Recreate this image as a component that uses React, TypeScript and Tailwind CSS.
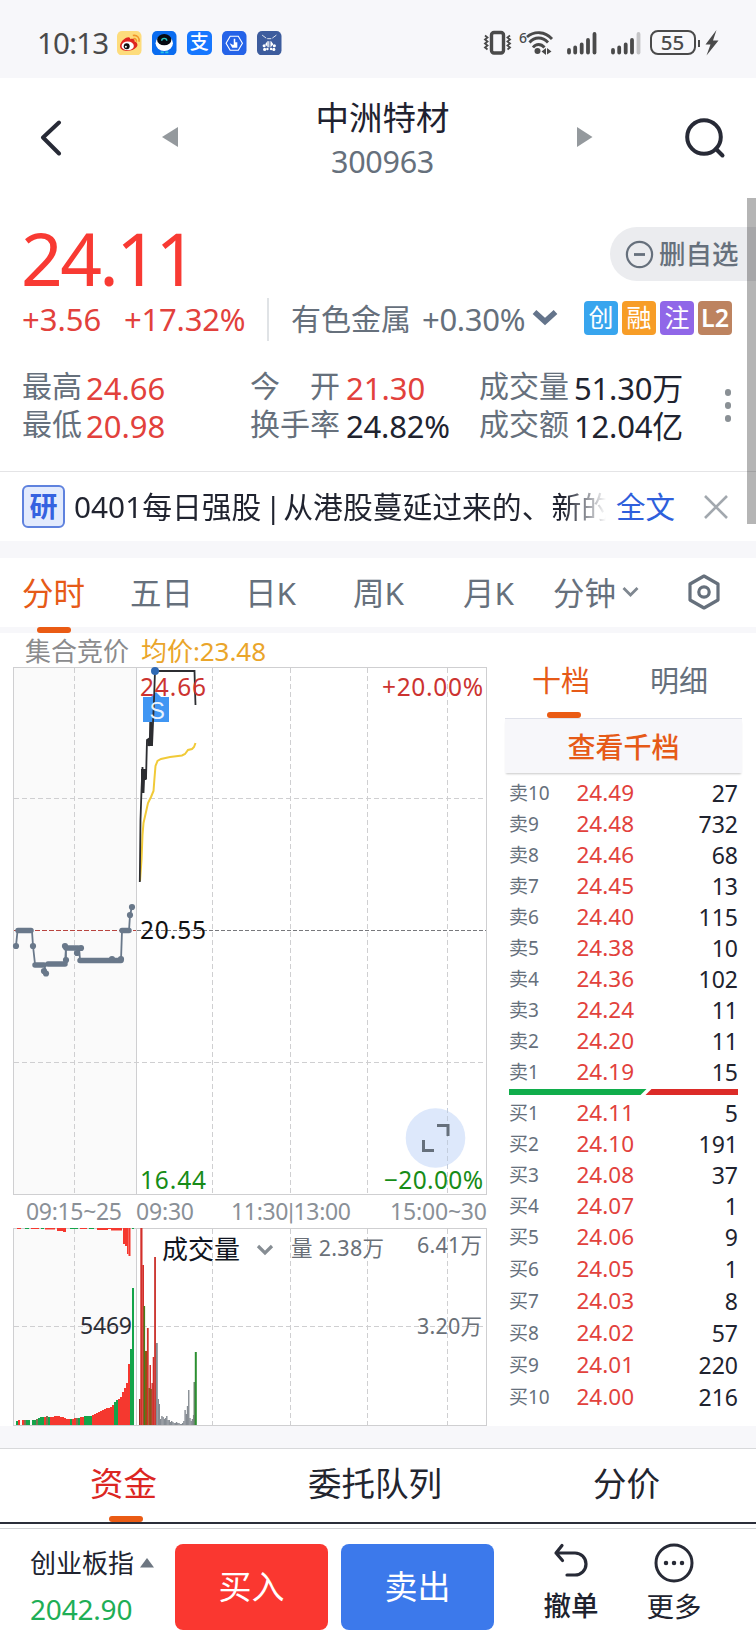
import { useState } from "react";
import clsx from "clsx";

const FONT = "font-['Noto_Sans','Noto_Sans_CJK_SC',sans-serif]";

const sells = [
  ["卖10", "24.49", "27"],
  ["卖9", "24.48", "732"],
  ["卖8", "24.46", "68"],
  ["卖7", "24.45", "13"],
  ["卖6", "24.40", "115"],
  ["卖5", "24.38", "10"],
  ["卖4", "24.36", "102"],
  ["卖3", "24.24", "11"],
  ["卖2", "24.20", "11"],
  ["卖1", "24.19", "15"],
];

const buys = [
  ["买1", "24.11", "5"],
  ["买2", "24.10", "191"],
  ["买3", "24.08", "37"],
  ["买4", "24.07", "1"],
  ["买5", "24.06", "9"],
  ["买6", "24.05", "1"],
  ["买7", "24.03", "8"],
  ["买8", "24.02", "57"],
  ["买9", "24.01", "220"],
  ["买10", "24.00", "216"],
];

const RED = "#f5382f";
const GREEN = "#14a44a";
const GREY = "#868c93";

// call auction volume, one bar per tick
const auctionHeights = [
  4, 5, 5, 5, 5, 5, 5, 5, 5, 5, 6, 7, 8, 8, 8, 9, 8, 8, 8, 9, 9, 9, 8, 8, 7, 6,
  6, 6, 6, 7, 7, 7, 8, 8, 9, 9, 9, 9, 10, 11, 12, 13, 14, 15, 16, 17, 17, 18,
  20, 23, 25, 26, 28, 33, 37, 42, 61, 76, 137,
];
const auctionColors =
  "gr.rngg.ggngggrngrrrrrrrrrrgrrngrrggggrrrrrrrrrrrggrrrrrrgg";

// unmatched volume hanging from the top: [x, width, depth, color]
const unmatched: [number, number, number, string][] = [
  [17, 4, 1, RED],
  [25, 4, 1, GREEN],
  [31, 8, 1, RED],
  [41, 3, 1, GREEN],
  [45, 10, 1.5, RED],
  [57, 6, 3, RED],
  [63, 3, 4, RED],
  [70, 8, 1, GREEN],
  [80, 7, 1, RED],
  [89, 5, 1, GREEN],
  [97, 11, 2, RED],
  [108, 3, 1, RED],
  [111, 11, 2.5, RED],
  [123, 2, 16, RED],
  [125, 2, 18, RED],
  [127, 1.5, 26, RED],
  [128.5, 2, 28, RED],
  [132, 2, 1, GREEN],
];

const sessionBars: [number, number, number, string][] = [
  [139, 1.6, 26, "#9d2a25"],
  [140.3, 2.2, 197, "#d3302b"],
  [142.3, 1.7, 160, "#d3302b"],
  [143.6, 1.5, 119, "#43801c"],
  [145, 2.5, 74, "#8f5514"],
  [146.9, 1.8, 97, "#d3302b"],
  [148.5, 1.6, 37, "#6f6410"],
  [149.5, 1.5, 60, "#d3302b"],
  [150.3, 1.6, 36, "#6f6410"],
  [151.5, 1.4, 42, "#c8302b"],
  [152.7, 1.6, 68, "#d3302b"],
  [154.1, 1.9, 168, "#cc3a35"],
  [156, 1.8, 82, GREY],
  [157.8, 1.2, 26, GREY],
  [159, 1, 21, GREY],
];
const quiet = [
  6, 9, 8, 6, 7, 9, 5, 5, 3, 4, 3, 2, 2, 3, 2, 2, 1, 1, 2, 4, 15, 11, 19, 35, 7,
  4, 6, 10,
];

function BarsIcon({ last }: { last: string }) {
  return (
    <svg width="32" height="26" viewBox="0 0 32 26" strokeLinecap="round" strokeWidth="3.8" stroke="#4a4a4a">
      <path d="M3 20v2.500M9.200 17.500v5M15.700 14.500v8M22 10v12.500" />
      <path d="M28.500 4v18.500" stroke={last} />
    </svg>
  );
}

function StatusBar() {
  return (
    <div className="flex h-[78px] items-center bg-[#f7f7fa] pt-[8px] pl-[37px] text-[#4a4a4a]">
      <span className="w-[80px] text-[29.500px] tracking-[-0.800px]">10:13</span>
      <div className="flex gap-[10.500px]">
        <svg width="24.500" height="24.500" viewBox="0 0 24 24">
          <rect width="24" height="24" rx="5" fill="#fddc7c" />
          <path d="M3 14c1-5 6-8 8-8s2 1 2 2c3-1 5 0 4 2 3 1 4 4 2 6-4 5-17 5-16-2z" fill="#df251f" />
          <ellipse cx="10.500" cy="14.600" rx="6" ry="4.200" fill="#fff" />
          <circle cx="9.500" cy="15" r="2.900" fill="#111" />
          <circle cx="8.700" cy="15.500" r="1" fill="#fff" />
          <path d="M15.500 4.500c4-1 7 2 6 6M16 7.500c2-.5 3.500 1 3 3" fill="none" stroke="#f0962a" strokeWidth="1.500" />
        </svg>
        <svg width="24.500" height="24.500" viewBox="0 0 24 24">
          <rect width="24" height="24" rx="5" fill="#0a6cf0" />
          <ellipse cx="12" cy="12" rx="8.500" ry="7.500" fill="#fff" />
          <ellipse cx="12" cy="8.500" rx="7" ry="5.500" fill="#070b12" />
          <path d="M9.500 9.500c0-3 5-3 5 0" fill="none" stroke="#28c6c0" strokeWidth="1.400" />
          <path d="M8.500 21h3M13 21h3" stroke="#28c6e0" strokeWidth="1.800" />
        </svg>
        <span className="flex size-[24.500px] items-center justify-center rounded-[5px] bg-[#1677ff] pb-[2px] text-[19px] font-medium text-white">
          支
        </span>
        <svg width="24.500" height="24.500" viewBox="0 0 24 24" fill="none" stroke="#fff">
          <rect width="24" height="24" rx="5" fill="#2563e8" stroke="none" />
          <path d="M8 5.200h8l4 6.800-4 6.800H8L4 12z" strokeWidth="1.100" />
          <path d="M11.500 7.500h1.500v3.500h2v5.500h-5L7.500 12l3 1.500h1z" fill="#fff" stroke="none" />
        </svg>
        <svg width="24.500" height="24.500" viewBox="0 0 24 24" fill="none" stroke="#fff">
          <rect width="24" height="24" rx="5" fill="#3d5c9d" stroke="none" />
          <path d="M5 4l4 3M19 4l-4 3M10 7.500h4M11.200 10v6M12.800 10v6" strokeWidth=".8" />
          <g fill="#fff" stroke="none">
            <path d="M10.500 9.500L8 13l2.500 3zM13.500 9.500L16 13l-2.500 3z" />
            <circle cx="7" cy="14.500" r="1.500" />
            <circle cx="17" cy="14.500" r="1.500" />
            <circle cx="7.500" cy="18" r="1.500" />
            <circle cx="16.500" cy="18" r="1.500" />
            <circle cx="10.200" cy="17.600" r="1.200" />
            <circle cx="13.800" cy="17.600" r="1.200" />
          </g>
        </svg>
      </div>
      <svg className="ml-[201px]" width="30" height="26" viewBox="0 0 30 26" fill="none" stroke="#4a4a4a">
        <rect x="8.500" y="2.500" width="12" height="20.500" rx="2.500" strokeWidth="3.400" />
        <path d="M2 5.500l2.500 2-2.500 2 2.500 2-2.500 2 2.500 2-2.500 2 2.500 2M27 5.500l-2.500 2 2.500 2-2.500 2 2.500 2-2.500 2 2.500 2-2.500 2" strokeWidth="1.800" />
      </svg>
      <svg className="ml-[5px] overflow-visible" width="36" height="26" viewBox="0 0 36 26" fill="none" stroke="#4a4a4a" strokeWidth="2.800">
        <text x="1" y="12.500" className="fill-[#4a4a4a] stroke-none text-[14px] font-medium">6</text>
        <path d="M9 7c7-6 18-6 25 2M11.500 12.500c5-6 13-6 18.500 0M15 17.500c3-4 8-4 11.500 0" />
        <circle cx="19.500" cy="21" r="3" fill="#4a4a4a" stroke="none" />
        <path d="M28 18v7l-4.500-3.500zM29 18l4.500 3.500-4.500 3z" fill="#4a4a4a" stroke="none" />
      </svg>
      <span className="ml-[12px] flex gap-[12px]">
        <BarsIcon last="#4a4a4a" />
        <BarsIcon last="#c4c4c6" />
      </span>
      <span className="mb-px ml-[8px] flex h-[25px] w-[46px] items-center justify-center rounded-[8px] border-2 border-[#4a4a4a] pb-px text-[20.500px] font-medium">
        55
      </span>
      <span className="ml-[2px] h-[7px] w-[2.500px] bg-[#4a4a4a]" />
      <svg className="ml-[5px]" width="14" height="26" viewBox="0 0 14 26">
        <path d="M11.500 0L.5 14.500h5L1.500 25.500 13.500 10.500H8z" fill="#4a4a4a" />
      </svg>
    </div>
  );
}

function Header() {
  return (
    <div className="flex h-[120px] items-start bg-white">
      <svg className="mt-[42px] ml-[36px]" width="30" height="36" viewBox="0 0 30 36" fill="none" stroke="#272a36" strokeWidth="4" strokeLinecap="round" strokeLinejoin="round">
        <path d="M23 2.500L7 17.500 23 33.500" />
      </svg>
      <svg className="mt-[48px] ml-[96px]" width="16" height="22" viewBox="0 0 16 22">
        <path d="M16 1v20L0 11z" fill="#94999d" />
      </svg>
      <div className="flex w-[399px] flex-col items-center pt-[17px] pl-[10px]">
        <span className="h-[44px] text-[33.500px] leading-[44px] text-[#1f2230]">中洲特材</span>
        <span className="text-[30.500px] leading-[44px] tracking-[-0.300px] text-[#66707c]">300963</span>
      </div>
      <svg className="mt-[48px]" width="16" height="22" viewBox="0 0 16 22">
        <path d="M0 1v20l15.500-10z" fill="#94999d" />
      </svg>
      <svg className="mt-[38px] ml-[90px]" width="44" height="46" viewBox="0 0 44 46" fill="none" stroke="#272a36" strokeWidth="4" strokeLinecap="round">
        <circle cx="21" cy="21" r="16.800" />
        <path d="M33 33l6.500 6.500" />
      </svg>
    </div>
  );
}

function Quote() {
  return (
    <div className="relative h-[273px] bg-white text-[#66707c]">
      <div className="flex items-start justify-between pl-[21px]">
        <span className="mt-[24px] h-[75px] text-[73px] leading-[72px] tracking-[-2.600px] text-[#f83a33]">24.11</span>
        <div className="mt-[29px] flex h-[54px] w-[146px] items-center rounded-l-full bg-[#ebecef] pl-[15px]">
          <svg width="29" height="29" viewBox="0 0 29 29" fill="none" stroke="#66707c" strokeWidth="2.200">
            <circle cx="14.500" cy="14.500" r="12.600" />
            <path d="M9 14.500h11" strokeWidth="2.800" />
          </svg>
          <span className="ml-[5px] text-[26.500px] font-medium">删自选</span>
        </div>
      </div>
      <div className="flex h-[44px] items-center pl-[22px]">
        <span className="w-[102px] text-[31px] text-[#e2413c]">+3.56</span>
        <span className="w-[143px] text-[31px] tracking-[-0.200px] text-[#e2413c]">+17.32%</span>
        <span className="h-[43px] w-[2px] bg-[#e0e3e6]" />
        <span className="ml-[22px] w-[131px] text-[30px]">有色金属</span>
        <span className="w-[110px] text-[31px] tracking-[-0.300px]">+0.30%</span>
        <svg className="mb-[2px]" width="26" height="22" viewBox="0 0 26 22" fill="none" stroke="#64748b" strokeWidth="5.500">
          <path d="M2.500 5L13 14.500 23.500 5" />
        </svg>
        <div className="mb-[2px] ml-[26px] flex gap-[4px] text-[25px] text-white">
          <span className="flex size-[34px] items-center justify-center rounded-[4px] bg-[#38a5ee] pb-[2px]">创</span>
          <span className="flex size-[34px] items-center justify-center rounded-[4px] bg-[#f79d27] pb-[2px]">融</span>
          <span className="flex size-[34px] items-center justify-center rounded-[4px] bg-[#9067e8] pb-[2px]">注</span>
          <span className="flex size-[34px] items-center justify-center rounded-[4px] bg-[#bd8360] pb-[2px] font-semibold">L2</span>
        </div>
      </div>
      <div className="flex pt-[27px] pl-[22px] text-[30px] leading-[36px]">
        <div className="w-[228px]">
          <div className="flex h-[37.500px]">
            <span className="w-[64px]">最高</span>
            <span className="pt-[2px] text-[31px] text-[#e2413c]">24.66</span>
          </div>
          <div className="flex h-[37.500px]">
            <span className="w-[64px]">最低</span>
            <span className="pt-[2px] text-[31px] text-[#e2413c]">20.98</span>
          </div>
        </div>
        <div className="w-[229px]">
          <div className="flex h-[37.500px]">
            <span className="flex w-[90px] justify-between">
              <span>今</span>
              <span>开</span>
            </span>
            <span className="pt-[2px] pl-[6px] text-[31px] text-[#e2413c]">21.30</span>
          </div>
          <div className="flex h-[37.500px]">
            <span className="w-[90px]">换手率</span>
            <span className="pt-[2px] pl-[6px] text-[31px] tracking-[-0.200px] text-[#20232f]">24.82%</span>
          </div>
        </div>
        <div className="w-[245.500px]">
          <div className="flex h-[37.500px]">
            <span className="w-[90px]">成交量</span>
            <span className="pt-[2px] pl-[5px] text-[31px] tracking-[-0.200px] text-[#20232f]">51.30万</span>
          </div>
          <div className="flex h-[37.500px]">
            <span className="w-[90px]">成交额</span>
            <span className="pt-[2px] pl-[5px] text-[31px] tracking-[-0.200px] text-[#20232f]">12.04亿</span>
          </div>
        </div>
        <div className="flex flex-col gap-[6.500px] pt-[21px]">
          <i className="size-[6.500px] rounded-full bg-[#8a9095]" />
          <i className="size-[6.500px] rounded-full bg-[#8a9095]" />
          <i className="size-[6.500px] rounded-full bg-[#8a9095]" />
        </div>
      </div>
    </div>
  );
}

function News() {
  return (
    <div className="flex h-[70px] items-center border-t border-[#e4e4e6] bg-white pl-[22px]">
      <span className="flex h-[43px] w-[43px] items-center justify-center rounded-[6px] border-2 border-[#5f82de] bg-[#e3ebfd] pb-[2px] text-[28px] font-bold text-[#3562e0]">
        研
      </span>
      <div className="ml-[9px] w-[532px] overflow-hidden bg-linear-to-r from-[#20232f] from-[92%] to-white to-[100%] bg-clip-text text-[29.800px] leading-[44px] whitespace-nowrap text-transparent">
        0401每日强股<span className="mr-[-6px] ml-[-4px]"> | </span>从港股蔓延过来的、新的
      </div>
      <span className="ml-[10px] text-[29.500px] text-[#2f5fdc]">全文</span>
      <svg className="ml-[28px]" width="26" height="26" viewBox="0 0 26 26" stroke="#a2a8ae" strokeWidth="2.600">
        <path d="M2 2l22 22M24 2L2 24" />
      </svg>
    </div>
  );
}

function PeriodTabs() {
  const [active, setActive] = useState("分时");
  const tabs = [
    ["分时", "w-[108px]"],
    ["五日", "w-[115px]"],
    ["日K", "w-[108px]"],
    ["周K", "w-[110px]"],
    ["月K", "w-[90px]"],
    ["分钟", "w-[69px]"],
  ];

  return (
    <div className="flex h-[75px] border-b-[6px] border-[#f7f7fa] bg-white pl-[22px] text-[31.500px] leading-[68px] text-[#66707c]">
      {tabs.map(([label, width]) => (
        <button key={label} onClick={() => setActive(label)} className={clsx("relative h-[69px] text-left whitespace-nowrap", width, active === label && "text-[#e65a17]")}>
          {label}
          {active === label && <i className="absolute top-[69px] left-[15px] h-[6px] w-[34px] rounded-[3px] bg-[#ea5b14]" />}
        </button>
      ))}
      <svg className="mt-[27px]" width="18" height="14" viewBox="0 0 18 14" fill="none" stroke="#7f8790" strokeWidth="2.800">
        <path d="M1.500 3L8.500 10 15.500 3" />
      </svg>
      <svg className="mt-[15px] ml-[46px]" width="36" height="38" viewBox="0 0 36 38" fill="none" stroke="#66707c" strokeWidth="3.200" strokeLinejoin="round">
        <path d="M18 3l14 8v16l-14 8-14-8v-16z" />
        <circle cx="18" cy="19" r="5.200" />
      </svg>
    </div>
  );
}

const gridX = [74.5, 212.5, 290.5, 367.5, 447.5];

function Charts() {
  // the viewBox starts at 633 so that chart coordinates are page coordinates
  return (
    <svg className="shrink-0" width="496" height="793" viewBox="0 633 496 793">
      <rect x="13" y="668" width="123" height="526" fill="#fafafa" />
      <rect x="13" y="1229" width="123" height="196" fill="#fafafa" />

      <g stroke="#cfcfd1" strokeDasharray="5 3">
        {gridX.map((x) => (
          <path key={x} d={`M${x} 668V1194M${x} 1229V1425`} />
        ))}
        <path d="M14 798.500H486M14 1062.500H486M14 1326.500H486" />
      </g>
      <path d="M14 930.500H136" stroke="#b8443f" strokeDasharray="5 2" />
      <path d="M137 930.500H486" stroke="#77787c" strokeDasharray="4 2" />
      <g fill="none" stroke="#cfcfd1">
        <rect x="13.500" y="667.500" width="473" height="527" />
        <rect x="13.500" y="1228.500" width="473" height="197" />
        <path d="M136.500 668V1194M136.500 1229V1425" />
      </g>

      {/* header + axis labels */}
      <g className="text-[26px]">
        <text x="25" y="661" fill="#8b8b8d">集合竞价</text>
        <text x="141" y="661" fill="#eaa52a" textLength="125">均价:23.48</text>
      </g>

      {/* call auction price */}
      <path
        d="M16 946L17.500 931H32L33 946M35 964H44L46 973M48 964H65L66 947H79L80 960H121L122 931H129L130 915L132 907M33 946L35 964M44 966L48 964M66 947L66 960M79 948L77 953"
        fill="none"
        stroke="#69788a"
        strokeWidth="1.800"
      />
      <path
        d="M18 930.500H31M35 965H44M48 964H65M66 948H78M80 960.500H121M122 930.500H129"
        stroke="#69788a"
        strokeWidth="5.500"
        strokeLinecap="round"
      />
      <g fill="#69788a">
        {[
          [16, 946], [33, 946], [44, 971], [46, 973.5], [65, 946], [66, 960], [81, 948],
          [77, 953], [112, 959], [121, 959], [130, 915], [132, 907],
        ].map(([x, y]) => (
          <circle key={`${x}-${y}`} cx={x} cy={y} r="3.100" />
        ))}
      </g>

      {/* intraday price and average */}
      <path
        d="M140 881L141.500 860 142.500 835 143.500 823 146 812 148 803 151 797 153.500 791 154.500 778 155.500 766 157.500 761 161 759 170 757 182 755.500 185 754 188 750 192 749 194 747 195.500 743"
        fill="none"
        stroke="#f1ca38"
        strokeWidth="2"
      />
      <rect x="143" y="697" width="26" height="25" fill="#4096f3" />
      <path d="M149 699l7-7 7 7z" fill="#4096f3" />
      <path
        d="M139.800 882L140.500 820 141.500 790 142.500 767 143.500 793 144.500 769 146 779 147 740 148.500 739 149.500 746 150.500 722 152 746 154 700 155 671H194.500L195 690 195.500 705"
        fill="none"
        stroke="#2c2d31"
        strokeWidth="1.800"
      />
      <path d="M142.500 769V793M145 770V780M148.800 739V746M151 722V746" stroke="#2c2d31" strokeWidth="3" />
      <text x="149.500" y="718.500" className="font-['Liberation_Sans',sans-serif] text-[23px]" fill="#e7f3ff">S</text>
      <circle cx="155" cy="671" r="4" fill="#3069b4" />

      <g className="text-[24.500px]">
        <text x="140" y="695.500" fill="#cc3330" textLength="66">24.66</text>
        <text x="140" y="938.500" fill="#111" textLength="66">20.55</text>
        <text x="140" y="1188.500" fill="#178c17" textLength="66">16.44</text>
        <text x="483" y="695.500" fill="#cc3330" textAnchor="end" textLength="101">+20.00%</text>
      </g>

      <circle cx="435.500" cy="1138" r="29.800" fill="#dde8fb" />
      <path d="M447.500 1108V1168" stroke="#c3cddd" strokeDasharray="5 3" />
      <path d="M437 1125.500H448V1136M423.500 1140V1150.500H434" fill="none" stroke="#66707c" strokeWidth="3" />
      <text x="483" y="1188.500" className="text-[24.500px]" fill="#178c17" textAnchor="end" textLength="99">−20.00%</text>

      <g className="text-[23px]" fill="#8a9097">
        <text x="26" y="1220" textLength="96">09:15~25</text>
        <text x="136" y="1220" textLength="58">09:30</text>
        <text x="231" y="1220" textLength="120">
          11:30<tspan className="font-[Roboto]">|</tspan>13:00
        </text>
        <text x="390" y="1220" textLength="97">15:00~30</text>
      </g>

      {/* volume */}
      {auctionHeights.map((h, i) => {
        const c = auctionColors[i];
        if (c === ".") return null;
        return (
          <rect key={i} x={16 + i * 2} y={1425 - h} width="2" height={h} fill={c === "g" ? GREEN : c === "r" ? RED : "#7d7450"} />
        );
      })}
      {unmatched.map(([x, w, h, c]) => (
        <rect key={x} x={x} y="1228" width={w} height={h} fill={c} />
      ))}
      {sessionBars.map(([x, w, h, c]) => (
        <rect key={x} x={x} y={1425 - h} width={w} height={h} fill={c} />
      ))}
      {quiet.map((h, i) => (
        <rect key={i} x={160 + i * 1.22} y={1425 - h} width="1.400" height={h} fill={GREY} />
      ))}
      <rect x="193.500" y="1382" width="1.500" height="43" fill="#6f8570" />
      <rect x="194.800" y="1352" width="2" height="73" fill="#2c8f31" />

      <text x="162" y="1259" className="text-[26px]" fill="#0f1420">成交量</text>
      <path d="M258 1246l7 7 7-7" fill="none" stroke="#868d93" strokeWidth="3.200" />
      <text x="291" y="1256" className="text-[21.500px]" fill="#6a7078" textLength="93">量 2.38万</text>
      <g className="text-[21.500px]" fill="#6a7078">
        <text x="417" y="1253" textLength="65">6.41万</text>
        <text x="417" y="1334" textLength="65">3.20万</text>
      </g>
      <text x="80" y="1334" className="text-[23px]" fill="#2b2d36" textLength="52">5469</text>
    </svg>
  );
}

function DepthRow({ row, tall }: { row: string[]; tall?: boolean }) {
  const [name, price, volume] = row;
  return (
    <div className={clsx("flex items-center pr-[4px] pl-[4px]", tall ? "h-[32px]" : "h-[31px]")}>
      <span className="w-[67.500px] text-[19px] text-[#66707c]">{name}</span>
      <span className="text-[22.500px] text-[#e2413c]">{price}</span>
      <span className="ml-auto text-[23px] text-[#20232f]">{volume}</span>
    </div>
  );
}

function Depth() {
  return (
    <div className="ml-[9px] w-[237px]">
      <div className="flex h-[86px] border-b border-[#dfe1ea] pt-[13px] text-[29px] leading-[70px] text-[#66707c]">
        <span className="relative w-[145px] pl-[27px] text-[#e65a17]">
          十档
          <i className="absolute top-[66px] left-[42px] h-[6px] w-[34px] rounded-[3px] bg-[#ea5b14]" />
        </span>
        <span>明细</span>
      </div>
      <div className="h-[54px] bg-[#f7f7fa] text-center text-[28px] leading-[56px] font-medium text-[#e65a17] shadow-[0_2px_2px_-1px_rgba(0,0,0,0.22)]">
        查看千档
      </div>
      <div className="pt-[5px]">
        {sells.map((row) => (
          <DepthRow key={row[0]} row={row} />
        ))}
      </div>
      <svg className="ml-[4px] block" width="229" height="10" viewBox="0 0 229 10">
        <path d="M0 1h137.500l-6 6H0z" fill="#10ad4b" />
        <path d="M142.500 1H229v6H136.500z" fill="#dc2b28" />
      </svg>
      {buys.map((row, i) => (
        <DepthRow key={row[0]} row={row} tall={i > 4} />
      ))}
    </div>
  );
}

function BottomTabs() {
  return (
    <div className="flex h-[74px] border-t border-[#d8d9db] bg-white pl-[90px] text-[33.500px] leading-[68px] text-[#22252f]">
      <span className="relative w-[218px] text-[#dc2622]">
        资金
        <i className="absolute top-[67px] left-[19px] h-[6px] w-[34px] rounded-[3px] bg-[#ea5b14]" />
      </span>
      <span className="w-[285px]">委托队列</span>
      <span>分价</span>
    </div>
  );
}

function TradeBar() {
  return (
    <div className="flex h-[104px] items-start border-t border-[#cfd1d4] bg-white pl-[30px] text-[#20232f]">
      <div className="w-[145px] pt-[16px]">
        <div className="flex h-[36px] items-center text-[26px]">
          创业板指
          <svg className="ml-[6px]" width="14" height="10" viewBox="0 0 14 10">
            <path d="M7 0l7 9.500H0z" fill="#6d7681" />
          </svg>
        </div>
        <div className="mt-[9px] text-[28px] leading-[38px] tracking-[-0.200px] text-[#1eae56]">2042.90</div>
      </div>
      <button className="mt-[15px] h-[86px] w-[153px] rounded-[8px] bg-[#fa3730] text-[33px] leading-[86px] text-white">买入</button>
      <button className="mt-[15px] ml-[13px] h-[86px] w-[153px] rounded-[8px] bg-[#3c79eb] text-[33px] leading-[86px] text-white">卖出</button>
      <div className="ml-[50px] flex w-[54px] flex-col items-center pt-[14px]">
        <svg width="38" height="38" viewBox="0 0 38 38" fill="none" stroke="#272a36" strokeWidth="3.200" strokeLinecap="round" strokeLinejoin="round">
          <path d="M10 2.500L4 10l6.500 7.500M4 10h19a11 11 0 0 1 0 22H15" />
        </svg>
        <span className="mt-[5px] text-[27.500px] leading-[39px] font-medium whitespace-nowrap">撤单</span>
      </div>
      <div className="ml-[49px] flex w-[54px] flex-col items-center pt-[13px]">
        <svg width="42" height="42" viewBox="0 0 42 42" fill="none" stroke="#272a36" strokeWidth="3">
          <circle cx="21" cy="21" r="18" />
          <path d="M13 21h.01M21 21h.01M29 21h.01" strokeWidth="4.500" strokeLinecap="round" />
        </svg>
        <span className="mt-[3px] text-[27.500px] leading-[40px] whitespace-nowrap">更多</span>
      </div>
    </div>
  );
}

export default function App() {
  return (
    <div className={clsx("relative flex h-[1632px] w-[756px] flex-col overflow-hidden bg-white leading-none", FONT)}>
      <StatusBar />
      <Header />
      <Quote />
      <News />
      <div className="h-[17px] bg-[#f7f7fa]" />
      <PeriodTabs />
      <div className="flex h-[793px] bg-white">
        <Charts />
        <Depth />
      </div>
      <div className="h-[22px] bg-[#f7f7fa]" />
      <BottomTabs />
      <div className="h-[6px] border-t-2 border-[#2b2e3a] bg-white" />
      <TradeBar />
      {/* scroll thumb */}
      <div className="absolute top-[198px] right-0 h-[326px] w-[9px] bg-black/29" />
    </div>
  );
}
